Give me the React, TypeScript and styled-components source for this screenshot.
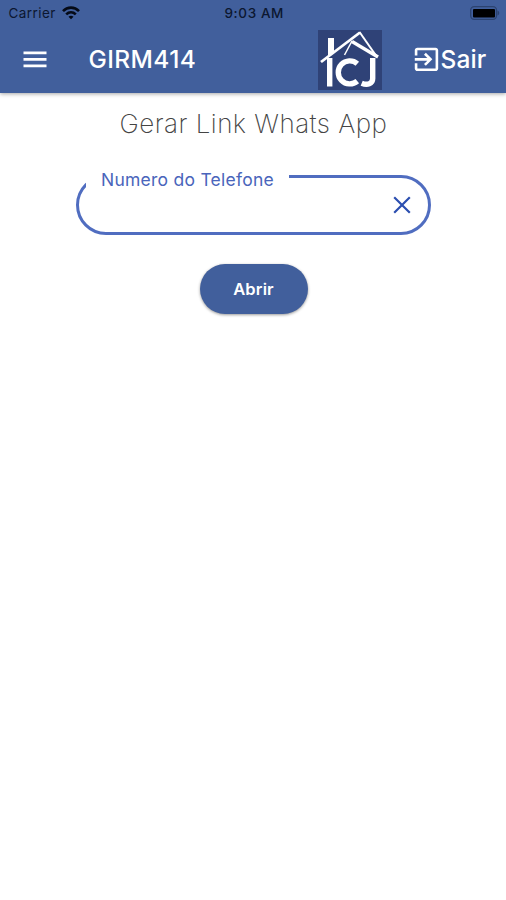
import React from "react";
import styled, { createGlobalStyle } from "styled-components";

const GlobalStyle = createGlobalStyle`
  *, *::before, *::after { box-sizing: border-box; }
  body { margin: 0; background: #fff; font-family: Inter, "Liberation Sans", sans-serif; }
`;

const Screen = styled.div`
  width: 100%;
  max-width: 506px;
  min-height: 900px;
  background: #fff;
`;

const Header = styled.header`
  height: 93px;
  background: #415f9c;
  box-shadow: 0 1px 4px rgba(0, 0, 0, 0.35);
`;

const StatusBar = styled.div`
  display: grid;
  grid-template-columns: 1fr auto 1fr;
  align-items: center;
  height: 26px;
  padding: 0 6px 0 8.5px;
  color: #0c1730;
  font-size: 13.5px;
  line-height: 26px;
`;

const Carrier = styled.div`
  display: flex;
  align-items: center;
  gap: 6px;
  letter-spacing: 0.45px;
`;

const Clock = styled.div`
  font-weight: 500;
  letter-spacing: 0.6px;
`;

const BatterySlot = styled.div`
  display: flex;
  justify-content: flex-end;
`;

const Toolbar = styled.div`
  display: flex;
  align-items: center;
  height: 67px;
  padding: 0 19.5px 0 21px;
  color: #fff;
`;

const IconButton = styled.button`
  display: flex;
  padding: 0;
  border: 0;
  background: none;
  color: inherit;
`;

const AppTitle = styled.h1`
  flex: 1;
  margin: 0 0 0 39.5px;
  font-size: 24.5px;
  font-weight: 500;
  line-height: 28px;
  padding-bottom: 2px;
  letter-spacing: 0.4px;
`;

const Logo = styled.svg`
  flex: none;
  margin: 1px 32px 0 0;
`;

const ExitButton = styled(IconButton)`
  align-items: center;
  gap: 1px;
  font-family: inherit;
  font-size: 24.5px;
  font-weight: 500;
  line-height: 28px;
  letter-spacing: 0.15px;
`;

const ExitLabel = styled.span`
  padding-bottom: 2px;
`;

const Content = styled.main`
  display: flex;
  flex-direction: column;
  align-items: center;
  padding-left: 1px;
`;

const PageTitle = styled.h2`
  margin: 15px 0 0;
  color: #444;
  font-size: 26px;
  font-weight: 200;
  line-height: 32px;
  letter-spacing: 0.47px;
`;

const Field = styled.div`
  position: relative;
  display: flex;
  align-items: center;
  width: 355px;
  height: 60px;
  margin-top: 35px;
  padding: 0 17px 0 26px;
  border: 3px solid #506dc0;
  border-radius: 30px;
  color: #2c4fb0;
`;

const FieldLabel = styled.label`
  position: absolute;
  top: -9px;
  left: 7px;
  width: 203px;
  height: 18px;
  padding-left: 15px;
  background: #fff;
  color: #4a65bb;
  font-size: 17.5px;
  line-height: 21px;
  letter-spacing: 0.25px;
  white-space: nowrap;
`;

const PhoneInput = styled.input`
  flex: 1;
  min-width: 0;
  border: 0;
  outline: 0;
  background: transparent;
  color: #222;
  font: 18px Inter, sans-serif;
`;

const OpenButton = styled.button`
  width: 108px;
  height: 50px;
  margin-top: 29px;
  border: 0;
  border-radius: 25px;
  background: #415f9c;
  box-shadow: 0 1px 3px rgba(0, 0, 0, 0.4);
  color: #fff;
  font-family: inherit;
  font-size: 16.5px;
  font-weight: 600;
  letter-spacing: 0.15px;
`;

const WifiIcon = () => (
  <svg width="18" height="14" viewBox="0 0 18 14" fill="none" stroke="#050a16" strokeWidth="2.6">
    <path d="M1 5.1C5.5.5 12.5.5 17 5.1" />
    <path d="M4.2 8.4c2.8-2.7 6.8-2.7 9.6 0" />
    <path d="M9 13.2 6.5 10.7c1.4-1.3 3.6-1.3 5 0z" fill="#050a16" stroke="none" />
  </svg>
);

const BatteryIcon = () => (
  <svg width="30" height="14" viewBox="0 0 30 14">
    <rect x="0.7" y="0.7" width="25.8" height="12.6" rx="3.5" fill="none" stroke="#2c4370" strokeWidth="1.3" />
    <rect x="3" y="3" width="22" height="8.4" rx="1" fill="#000" />
    <path d="M27.5 4.5c2.3 1 2.3 4 0 5z" fill="#2c4370" />
  </svg>
);

const MenuIcon = () => (
  <svg width="28" height="28" viewBox="0 0 28 28" fill="currentColor">
    <path d="M2.5 5.5h23v2.7h-23zM2.5 12h23v2.7h-23zM2.5 18.5h23v2.7h-23z" />
  </svg>
);

const ExitIcon = () => (
  <svg width="26" height="26" viewBox="2.4 2.5 20 20" fill="currentColor">
    <path d="M10.09 15.59 11.5 17l5-5-5-5-1.41 1.41L12.67 11H3v2h9.67l-2.58 2.59zM19 3H5c-1.11 0-2 .9-2 2v4h2V5h14v14H5v-4H3v4c0 1.1.89 2 2 2h14c1.1 0 2-.9 2-2V5c0-1.1-.9-2-2-2z" />
  </svg>
);

const CompanyLogo = () => (
  <Logo width="64" height="60" viewBox="0 0 64 60" fill="none" stroke="#fff">
    <rect width="64" height="60" fill="#2f4277" stroke="none" />
    <path d="M10 26V8h6v14z" fill="#fff" stroke="none" />
    <path d="M3 32 42 2.5" strokeWidth="2.8" />
    <path d="M41.5 2 59 27" strokeWidth="2" />
    <path d="M34 11.5 60 27" strokeWidth="3.4" />
    <path d="M34 11 26.5 25" strokeWidth="1.5" />
    <path d="M11.7 28v28.5" strokeWidth="5.4" />
    <path d="M39.3 33.7a11.5 11.5 0 1 0 0 17.4" strokeWidth="5.4" />
    <path d="M54.7 28v20.5c0 5.5-5.5 7-11 4.7" strokeWidth="5.4" />
  </Logo>
);

const CloseIcon = () => (
  <svg width="18" height="18" viewBox="0 0 18 18" stroke="currentColor" strokeWidth="2.2">
    <path d="M1.2 1.2 16.8 16.8M16.8 1.2 1.2 16.8" />
  </svg>
);

export default function App() {
  return (
    <>
      <GlobalStyle />
      <Screen>
        <Header>
          <StatusBar>
            <Carrier>
              Carrier
              <WifiIcon />
            </Carrier>
            <Clock>9:03 AM</Clock>
            <BatterySlot>
              <BatteryIcon />
            </BatterySlot>
          </StatusBar>
          <Toolbar>
            <IconButton aria-label="Menu">
              <MenuIcon />
            </IconButton>
            <AppTitle>GIRM414</AppTitle>
            <CompanyLogo />
            <ExitButton>
              <ExitIcon />
              <ExitLabel>Sair</ExitLabel>
            </ExitButton>
          </Toolbar>
        </Header>
        <Content>
          <PageTitle>Gerar Link Whats App</PageTitle>
          <Field>
            <FieldLabel htmlFor="phone">Numero do Telefone</FieldLabel>
            <PhoneInput id="phone" type="tel" />
            <IconButton aria-label="Limpar">
              <CloseIcon />
            </IconButton>
          </Field>
          <OpenButton>Abrir</OpenButton>
        </Content>
      </Screen>
    </>
  );
}
